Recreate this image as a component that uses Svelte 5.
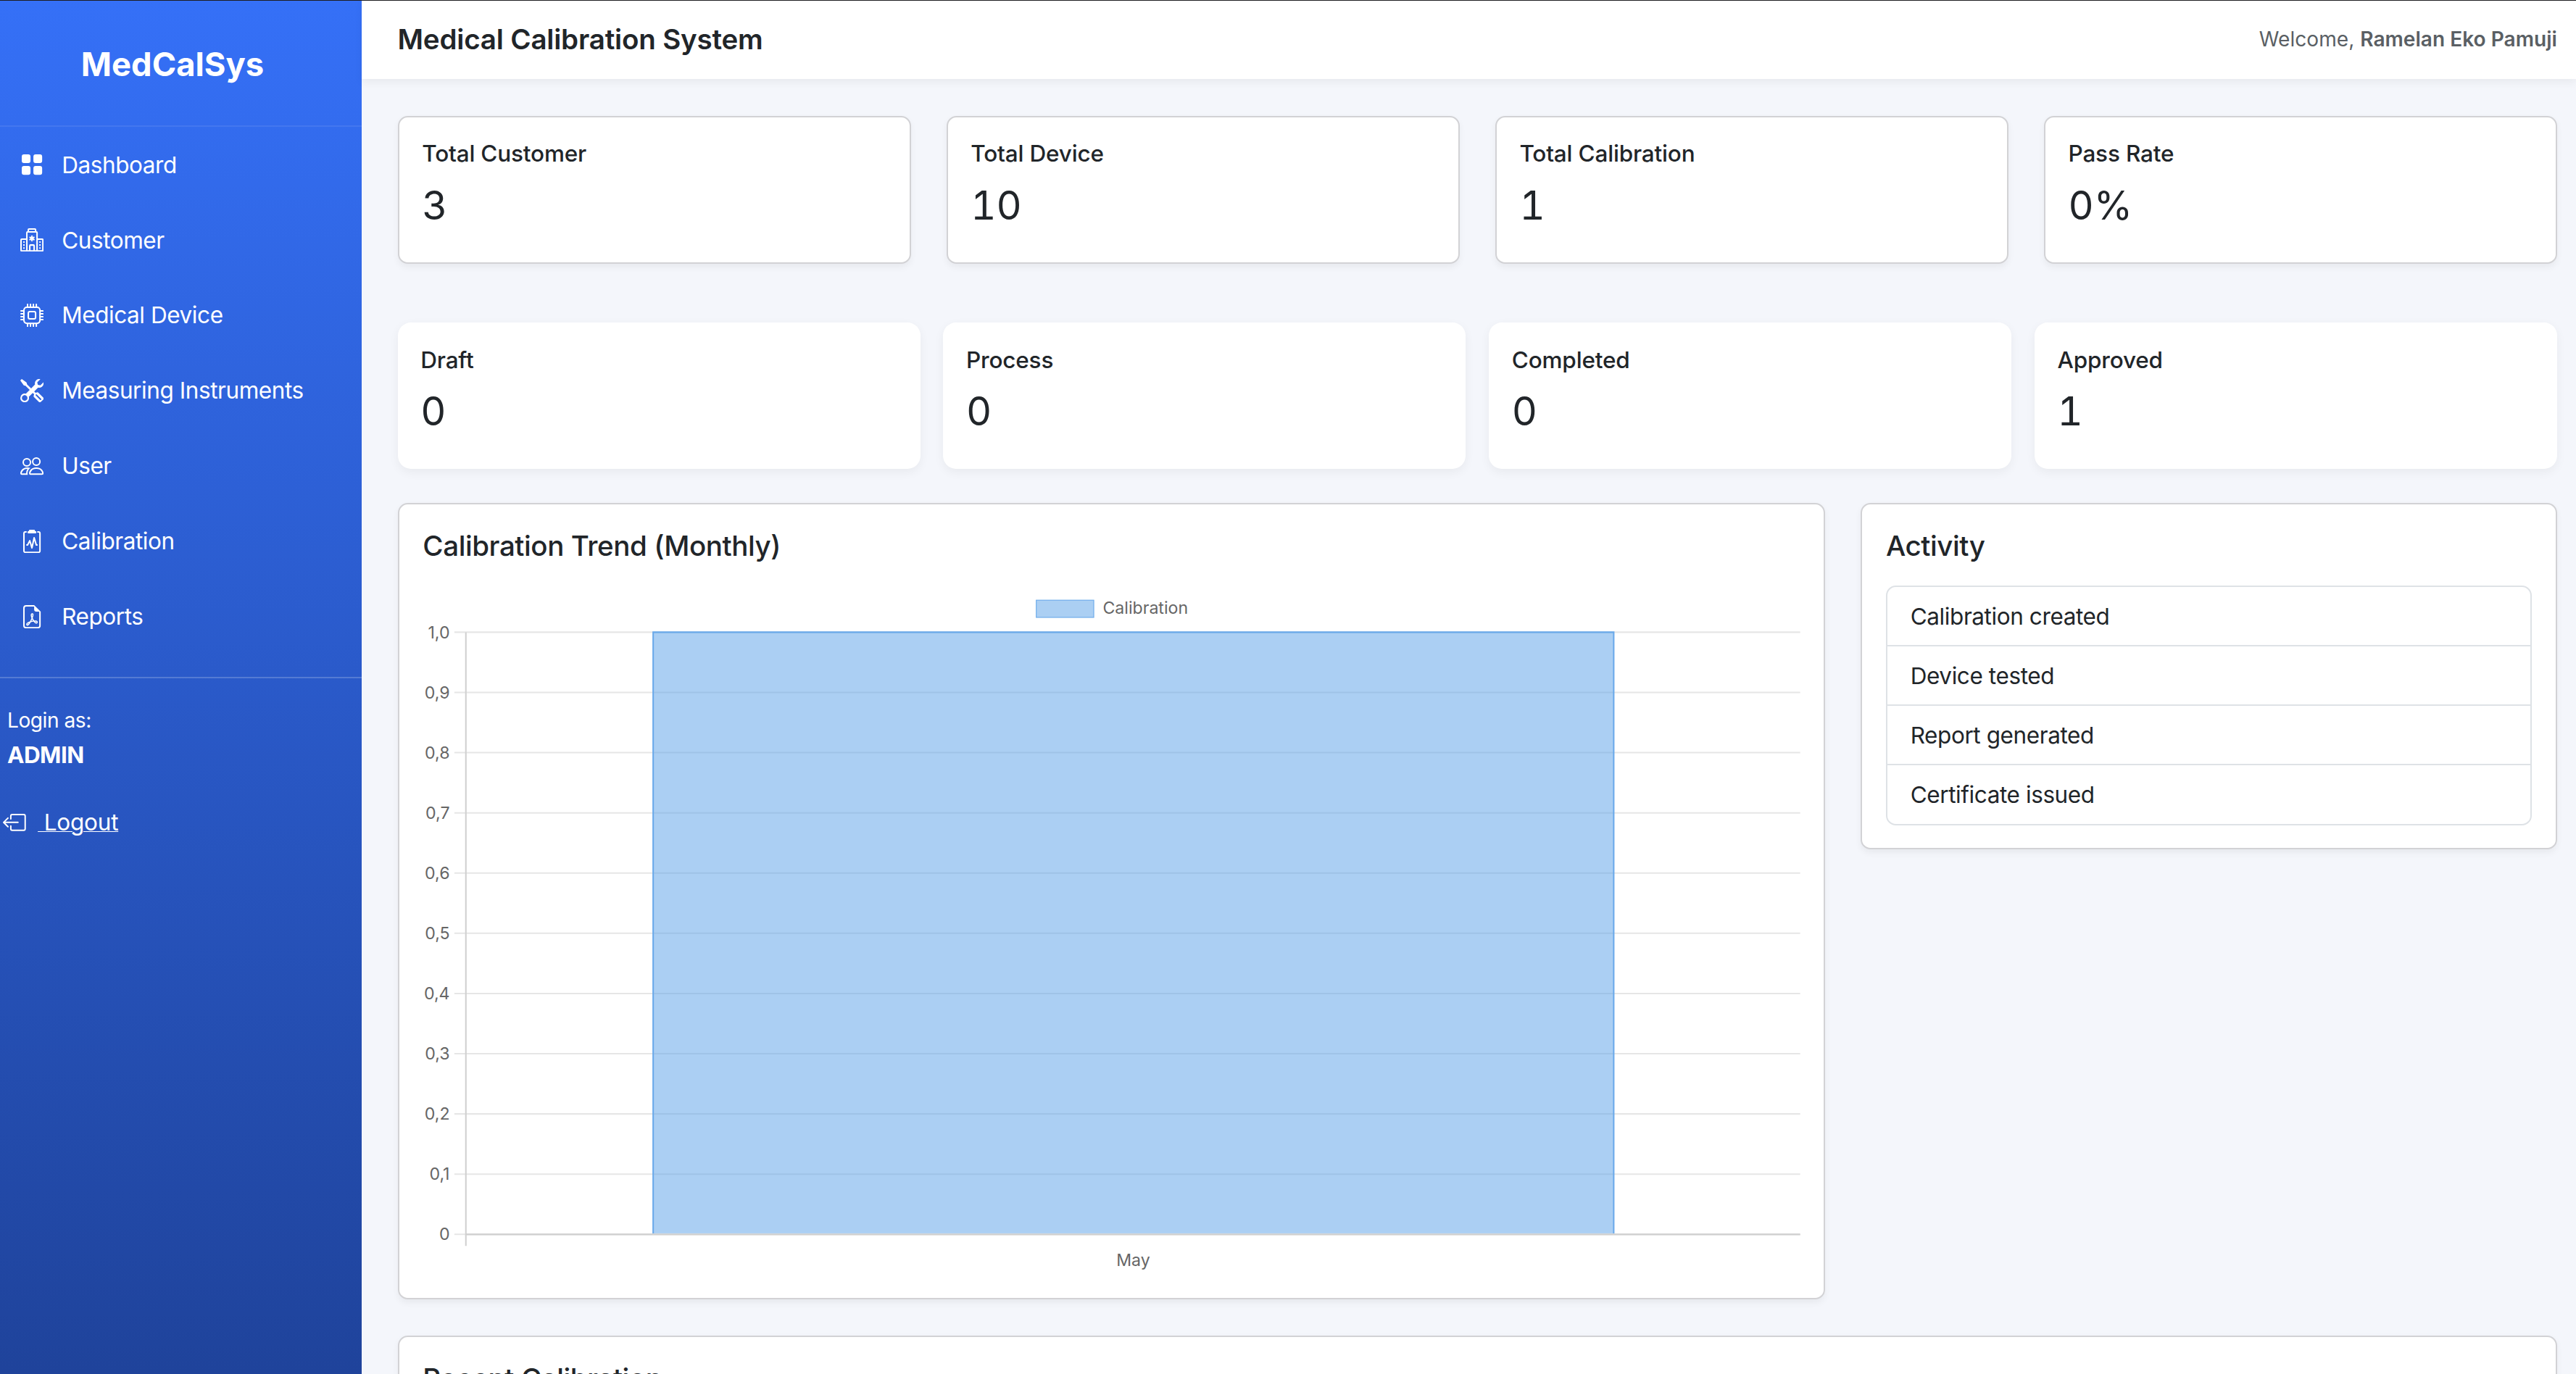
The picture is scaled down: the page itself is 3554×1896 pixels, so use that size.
<script>
    const navItems = [
        {
            label: "Dashboard",
            paths: [
                "M1 2.5A1.5 1.5 0 0 1 2.5 1h3A1.5 1.5 0 0 1 7 2.5v3A1.5 1.5 0 0 1 5.5 7h-3A1.5 1.5 0 0 1 1 5.5zm8 0A1.5 1.5 0 0 1 10.5 1h3A1.5 1.5 0 0 1 15 2.5v3A1.5 1.5 0 0 1 13.5 7h-3A1.5 1.5 0 0 1 9 5.5zm-8 8A1.5 1.5 0 0 1 2.5 9h3A1.5 1.5 0 0 1 7 10.5v3A1.5 1.5 0 0 1 5.5 15h-3A1.5 1.5 0 0 1 1 13.5zm8 0A1.5 1.5 0 0 1 10.5 9h3a1.5 1.5 0 0 1 1.5 1.5v3a1.5 1.5 0 0 1-1.5 1.5h-3A1.5 1.5 0 0 1 9 13.5z",
            ],
        },
        {
            label: "Customer",
            paths: [
                "M8.5 5.034v1.1l.953-.55.5.867L9 7l.953.55-.5.866-.953-.55v1.1h-1v-1.1l-.953.55-.5-.866L7 7l-.953-.55.5-.866.953.55v-1.1zM13.25 9a.25.25 0 0 0-.25.25v.5c0 .138.112.25.25.25h.5a.25.25 0 0 0 .25-.25v-.5a.25.25 0 0 0-.25-.25zM13 11.25a.25.25 0 0 1 .25-.25h.5a.25.25 0 0 1 .25.25v.5a.25.25 0 0 1-.25.25h-.5a.25.25 0 0 1-.25-.25zm.25 1.75a.25.25 0 0 0-.25.25v.5c0 .138.112.25.25.25h.5a.25.25 0 0 0 .25-.25v-.5a.25.25 0 0 0-.25-.25zm-11-4a.25.25 0 0 0-.25.25v.5c0 .138.112.25.25.25h.5A.25.25 0 0 0 3 9.75v-.5A.25.25 0 0 0 2.75 9zm0 2a.25.25 0 0 0-.25.25v.5c0 .138.112.25.25.25h.5a.25.25 0 0 0 .25-.25v-.5a.25.25 0 0 0-.25-.25zM2 13.25a.25.25 0 0 1 .25-.25h.5a.25.25 0 0 1 .25.25v.5a.25.25 0 0 1-.25.25h-.5a.25.25 0 0 1-.25-.25z",
                "M5 1a1 1 0 0 1 1-1h4a1 1 0 0 1 1 1v1a1 1 0 0 1 1 1v4h3a1 1 0 0 1 1 1v7a1 1 0 0 1-1 1H1a1 1 0 0 1-1-1V8a1 1 0 0 1 1-1h3V3a1 1 0 0 1 1-1zm2 14h2v-3H7zm3 0h1V3H5v12h1v-3a1 1 0 0 1 1-1h2a1 1 0 0 1 1 1zm0-14H6v1h4zm2 7v7h3V8zm-8 7V8H1v7z",
            ],
        },
        {
            label: "Medical Device",
            paths: [
                "M5 0a.5.5 0 0 1 .5.5V2h1V.5a.5.5 0 0 1 1 0V2h1V.5a.5.5 0 0 1 1 0V2h1V.5a.5.5 0 0 1 1 0V2A2.5 2.5 0 0 1 14 4.5h1.5a.5.5 0 0 1 0 1H14v1h1.5a.5.5 0 0 1 0 1H14v1h1.5a.5.5 0 0 1 0 1H14v1h1.5a.5.5 0 0 1 0 1H14a2.5 2.5 0 0 1-2.5 2.5v1.5a.5.5 0 0 1-1 0V14h-1v1.5a.5.5 0 0 1-1 0V14h-1v1.5a.5.5 0 0 1-1 0V14h-1v1.5a.5.5 0 0 1-1 0V14A2.5 2.5 0 0 1 2 11.5H.5a.5.5 0 0 1 0-1H2v-1H.5a.5.5 0 0 1 0-1H2v-1H.5a.5.5 0 0 1 0-1H2v-1H.5a.5.5 0 0 1 0-1H2A2.5 2.5 0 0 1 4.5 2V.5A.5.5 0 0 1 5 0m-.5 3A1.5 1.5 0 0 0 3 4.5v7A1.5 1.5 0 0 0 4.5 13h7a1.5 1.5 0 0 0 1.5-1.5v-7A1.5 1.5 0 0 0 11.5 3zM5 6.5A1.5 1.5 0 0 1 6.5 5h3A1.5 1.5 0 0 1 11 6.5v3A1.5 1.5 0 0 1 9.5 11h-3A1.5 1.5 0 0 1 5 9.5zM6.5 6a.5.5 0 0 0-.5.5v3a.5.5 0 0 0 .5.5h3a.5.5 0 0 0 .5-.5v-3a.5.5 0 0 0-.5-.5z",
            ],
        },
        {
            label: "Measuring Instruments",
            paths: [
                "M1 0 0 1l2.2 3.081a1 1 0 0 0 .815.419h.07a1 1 0 0 1 .708.293l2.675 2.675-2.617 2.654A3.003 3.003 0 0 0 0 13a3 3 0 1 0 5.878-.851l2.654-2.617.968.968-.305.914a1 1 0 0 0 .242 1.023l3.27 3.27a.997.997 0 0 0 1.414 0l1.586-1.586a.997.997 0 0 0 0-1.414l-3.27-3.27a1 1 0 0 0-1.023-.242L10.5 9.5l-.96-.96 2.68-2.643A3.005 3.005 0 0 0 16 3q0-.405-.102-.777l-2.14 2.141L12 4l-.364-1.757L13.777.102a3 3 0 0 0-3.675 3.68L7.462 6.46 4.793 3.793a1 1 0 0 1-.293-.707v-.071a1 1 0 0 0-.419-.814zm9.646 10.646a.5.5 0 0 1 .708 0l2.914 2.915a.5.5 0 0 1-.707.707l-2.915-2.914a.5.5 0 0 1 0-.708M3 11l.471.242.529.026.287.445.445.287.026.529L5 13l-.242.471-.026.529-.445.287-.287.445-.529.026L3 15l-.471-.242L2 14.732l-.287-.445L1.268 14l-.026-.529L1 13l.242-.471.026-.529.445-.287.287-.445.529-.026z",
            ],
        },
        {
            label: "User",
            paths: [
                "M15 14s1 0 1-1-1-4-5-4-5 3-5 4 1 1 1 1zm-7.978-1L7 12.996c.001-.264.167-1.03.76-1.72C8.312 10.629 9.282 10 11 10c1.717 0 2.687.63 3.24 1.276.593.69.758 1.457.76 1.72l-.008.002-.014.002zM11 7a2 2 0 1 0 0-4 2 2 0 0 0 0 4m3-2a3 3 0 1 1-6 0 3 3 0 0 1 6 0M6.936 9.28a6 6 0 0 0-1.23-.247A7 7 0 0 0 5 9c-4 0-5 3-5 4q0 1 1 1h4.216A2.24 2.24 0 0 1 5 13c0-1.01.377-2.042 1.09-2.904.243-.294.526-.569.846-.816M4.92 10A5.5 5.5 0 0 0 4 13H1c0-.26.164-1.03.76-1.724.545-.636 1.492-1.256 3.16-1.275ZM1.5 5.5a3 3 0 1 1 6 0 3 3 0 0 1-6 0m3-2a2 2 0 1 0 0 4 2 2 0 0 0 0-4",
            ],
        },
        {
            label: "Calibration",
            paths: [
                "M9.5 0a.5.5 0 0 1 .5.5.5.5 0 0 0 .5.5.5.5 0 0 1 .5.5V2a.5.5 0 0 1-.5.5h-5A.5.5 0 0 1 5 2v-.5a.5.5 0 0 1 .5-.5.5.5 0 0 0 .5-.5.5.5 0 0 1 .5-.5z",
                "M3 2.5a.5.5 0 0 1 .5-.5H4a.5.5 0 0 0 0-1h-.5A1.5 1.5 0 0 0 2 2.5v12A1.5 1.5 0 0 0 3.5 16h9a1.5 1.5 0 0 0 1.5-1.5v-12A1.5 1.5 0 0 0 12.5 1H12a.5.5 0 0 0 0 1h.5a.5.5 0 0 1 .5.5v12a.5.5 0 0 1-.5.5h-9a.5.5 0 0 1-.5-.5z",
                "M9.979 5.356a.5.5 0 0 0-.968.04L7.92 10.49l-.94-3.135a.5.5 0 0 0-.926-.08L4.69 10H4.5a.5.5 0 0 0 0 1H5a.5.5 0 0 0 .447-.276l.936-1.873 1.138 3.793a.5.5 0 0 0 .968-.04L9.58 7.51l.94 3.135A.5.5 0 0 0 11 11h.5a.5.5 0 0 0 0-1h-.128z",
            ],
        },
        {
            label: "Reports",
            paths: [
                "M14 14V4.5L9.5 0H4a2 2 0 0 0-2 2v12a2 2 0 0 0 2 2h8a2 2 0 0 0 2-2M9.5 3A1.5 1.5 0 0 0 11 4.5h2V14a1 1 0 0 1-1 1H4a1 1 0 0 1-1-1V2a1 1 0 0 1 1-1h5.5z",
                "M4.603 14.087a.8.8 0 0 1-.438-.42c-.195-.388-.13-.776.08-1.102.198-.307.526-.568.897-.787a7.7 7.7 0 0 1 1.482-.645 20 20 0 0 0 1.062-2.227 7.3 7.3 0 0 1-.43-1.295c-.086-.4-.119-.796-.046-1.136.075-.354.274-.672.65-.823.192-.077.4-.12.602-.077a.7.7 0 0 1 .477.365c.088.164.12.356.127.538.007.188-.012.396-.047.614-.084.51-.27 1.134-.52 1.794a11 11 0 0 0 .98 1.686 5.8 5.8 0 0 1 1.334.05c.364.066.734.195.96.465.12.144.193.32.2.518.007.192-.047.382-.138.563a1.04 1.04 0 0 1-.354.416.86.86 0 0 1-.51.138c-.331-.014-.654-.196-.933-.417a5.7 5.7 0 0 1-.911-.95 11.7 11.7 0 0 0-1.997.406 11.3 11.3 0 0 1-1.02 1.51c-.292.35-.609.656-.927.787a.8.8 0 0 1-.58.029m1.379-1.901q-.25.115-.459.238c-.328.194-.541.383-.647.547-.094.145-.096.25-.04.361q.016.032.026.044l.035-.012c.137-.056.355-.235.635-.572a8 8 0 0 0 .45-.606m1.64-1.33a13 13 0 0 1 1.01-.193 12 12 0 0 1-.51-.858 21 21 0 0 1-.5 1.05zm2.446.45q.226.245.435.41c.24.19.407.253.498.256a.1.1 0 0 0 .07-.015.3.3 0 0 0 .094-.125.44.44 0 0 0 .059-.2.1.1 0 0 0-.026-.063c-.052-.062-.2-.152-.518-.209a4 4 0 0 0-.612-.053zM8.078 7.8a7 7 0 0 0 .2-.828q.046-.282.038-.465a.6.6 0 0 0-.032-.198.5.5 0 0 0-.145.04c-.087.035-.158.106-.196.283-.04.192-.03.469.046.822q.036.167.09.346z",
            ],
        },
    ];

    const summary = [
        { label: "Total Customer", value: "3" },
        { label: "Total Device", value: "10" },
        { label: "Total Calibration", value: "1" },
        { label: "Pass Rate", value: "0%" },
    ];

    const statuses = [
        { label: "Draft", value: "0" },
        { label: "Process", value: "0" },
        { label: "Completed", value: "0" },
        { label: "Approved", value: "1" },
    ];

    const activity = ["Calibration created", "Device tested", "Report generated", "Certificate issued"];

    // chart geometry, in the card's own coordinates
    const yTop = 78.7;
    const yZero = 445.3;
    const ticks = [1, 0.9, 0.8, 0.7, 0.6, 0.5, 0.4, 0.3, 0.2, 0.1, 0].map((v) => ({
        y: yZero - (yZero - yTop) * v,
        label: v === 0 ? "0" : v === 1 ? "1,0" : String(v).replace(".", ","),
    }));
</script>

<div class="page">
    <div class="shell">
        <aside class="sidebar">
            <div class="brand">MedCalSys</div>
            <nav class="nav">
                {#each navItems as item}
                    <div class="nav-item">
                        <svg class="nav-icon" viewBox="0 0 16 16" fill="currentColor">
                            {#each item.paths as d}
                                <path {d} />
                            {/each}
                        </svg>
                        <span>{item.label}</span>
                    </div>
                {/each}
            </nav>
            <div class="side-foot">
                <div class="login-label">Login as:</div>
                <div class="login-role">ADMIN</div>
                <div class="logout">
                    <svg class="logout-icon" viewBox="0 0 16 16" fill="currentColor">
                        <path d="M6 12.5a.5.5 0 0 0 .5.5h8a.5.5 0 0 0 .5-.5v-9a.5.5 0 0 0-.5-.5h-8a.5.5 0 0 0-.5.5v2a.5.5 0 0 1-1 0v-2A1.5 1.5 0 0 1 6.5 2h8A1.5 1.5 0 0 1 16 3.5v9a1.5 1.5 0 0 1-1.5 1.5h-8A1.5 1.5 0 0 1 5 12.5v-2a.5.5 0 0 1 1 0z" />
                        <path d="M.146 8.354a.5.5 0 0 1 0-.708l3-3a.5.5 0 1 1 .708.708L1.707 7.5H10.5a.5.5 0 0 1 0 1H1.707l2.147 2.146a.5.5 0 0 1-.708.708z" />
                    </svg>
                    <a href="#logout">&nbsp;Logout</a>
                </div>
            </div>
        </aside>

        <div class="main">
            <header class="topbar">
                <h1>Medical Calibration System</h1>
                <div class="welcome">Welcome, <strong>Ramelan Eko Pamuji</strong></div>
            </header>

            <div class="content">
                <section class="row-summary">
                    {#each summary as s}
                        <div class="card stat">
                            <div class="stat-label">{s.label}</div>
                            <div class="stat-value">{s.value}</div>
                        </div>
                    {/each}
                </section>

                <section class="row-status">
                    {#each statuses as s}
                        <div class="status">
                            <div class="stat-label">{s.label}</div>
                            <div class="stat-value">{s.value}</div>
                        </div>
                    {/each}
                </section>

                <section class="row-panels">
                    <div class="card chart-card">
                        <h2>Calibration Trend (Monthly)</h2>
                        <svg class="chart" viewBox="0 0 869 484.6" font-family="Inter, sans-serif">
                            <rect x="389" y="59.2" width="35" height="10.5" fill="#abcff3" stroke="#6aa9ea" stroke-width="0.5" />
                            <text x="429.5" y="67.7" font-size="10.2" fill="#666">Calibration</text>
                            {#each ticks as t}
                                <line x1="34.8" x2="854" y1={t.y} y2={t.y} stroke="#e6e6e6" stroke-width="0.9" />
                                <text x="32" y={t.y + 3.6} text-anchor="end" font-size="10.2" fill="#666">{t.label}</text>
                            {/each}
                            <line x1="41.8" x2="41.8" y1={yTop} y2={yZero + 7} stroke="#d0d0d0" stroke-width="0.9" />
                            <rect x="155.8" y={yTop} width="584.7" height={yZero - yTop - 0.6} fill="rgba(87,159,231,0.5)" />
                            <path d="M155.8 {yZero - 0.6}V{yTop}H740.5V{yZero - 0.6}" fill="none" stroke="#6aa9ea" stroke-width="0.9" />
                            <line x1="41.8" x2="854" y1={yZero} y2={yZero} stroke="#cfcfcf" stroke-width="1" />
                            <text x="448" y="464.5" text-anchor="middle" font-size="10.2" fill="#666">May</text>
                        </svg>
                    </div>

                    <div class="card activity-card">
                        <h2>Activity</h2>
                        <ul class="activity">
                            {#each activity as a}
                                <li>{a}</li>
                            {/each}
                        </ul>
                    </div>
                </section>

                <section class="card recent">
                    <h2>Recent Calibration</h2>
                </section>
            </div>
        </div>
    </div>
</div>

<style>
    :global(body) {
        margin: 0;
        background: #f4f6fb;
    }

    .page {
        position: relative;
        height: 100vh;
        overflow: hidden;
    }

    /* hairline of the window chrome above the page */
    .page::before {
        content: "";
        position: absolute;
        inset: 0 0 auto;
        height: 1px;
        background: #1d1d20;
        z-index: 1;
    }

    /* the capture was taken at about 227% browser zoom, everything below is in css px of that page */
    .shell {
        zoom: 2.26658;
        display: flex;
        height: 836.5px;
        font-family: Inter, "Liberation Sans", sans-serif;
        color: #212529;
    }

    /* ── Sidebar ─────────────────────────────────────────────── */
    .sidebar {
        flex: 0 0 220px;
        background: linear-gradient(180deg, #3570f7 0%, #1f439b 100%);
        color: #fff;
    }

    .brand {
        height: 76.4px;
        line-height: 78.6px;
        padding-right: 10px;
        text-align: center;
        font-size: 20px;
        font-weight: 700;
        border-bottom: 1px solid rgba(255, 255, 255, 0.08);
    }

    .nav-item {
        display: flex;
        align-items: center;
        gap: 11.1px;
        height: 45.85px;
        padding-left: 12.3px;
        font-size: 13.9px;
        letter-spacing: -0.19px;
    }

    .nav-icon {
        width: 14.2px;
        height: 14.2px;
        flex: none;
    }

    .side-foot {
        margin-top: 14px;
        padding: 15.6px 0 0 4.4px;
        border-top: 1px solid rgba(255, 255, 255, 0.2);
    }

    .login-label {
        font-size: 12.4px;
        letter-spacing: -0.2px;
        line-height: 20px;
    }

    .login-role {
        font-size: 13.9px;
        font-weight: 700;
        letter-spacing: -0.25px;
        line-height: 20px;
        margin-top: 0.7px;
    }

    .logout {
        display: flex;
        align-items: center;
        margin: 21.4px 0 0 -2.7px;
        line-height: 20px;
        font-size: 13.9px;
        letter-spacing: -0.1px;
    }

    .logout-icon {
        width: 14px;
        height: 14px;
        flex: none;
        margin-right: 7.3px;
    }

    .logout a {
        color: #fff;
        text-decoration: underline;
        text-decoration-thickness: 0.5px;
    }

    /* ── Main ────────────────────────────────────────────────── */
    .main {
        flex: 1;
        min-width: 0;
    }

    .topbar {
        display: flex;
        align-items: center;
        justify-content: space-between;
        height: 48px;
        padding: 0 11.5px 0 22px;
        background: #fff;
        box-shadow: 0 2px 5px rgba(0, 0, 0, 0.05);
    }

    h1 {
        margin: 0;
        font-size: 17px;
        font-weight: 600;
        letter-spacing: -0.08px;
    }

    .welcome {
        font-size: 12.4px;
        color: #5a5f64;
    }

    .welcome strong {
        font-weight: 600;
    }

    .content {
        padding: 22.5px 11.5px 0 22px;
    }

    .card {
        background: #fff;
        border: 1px solid #d2d2d5;
        border-radius: 6px;
        box-shadow: 0 2px 4px rgba(0, 0, 0, 0.05);
        box-sizing: border-box;
    }

    .row-summary {
        display: grid;
        grid-template-columns: repeat(4, 1fr);
        gap: 21.6px;
    }

    .stat {
        height: 90px;
        padding: 13.5px 14px;
    }

    .stat-label {
        font-size: 13.9px;
        font-weight: 500;
        letter-spacing: -0.08px;
        line-height: 18px;
    }

    .stat-value {
        font-size: 24px;
        font-feature-settings: "tnum";
        line-height: 30px;
        margin-top: 7px;
    }

    .row-status {
        display: grid;
        grid-template-columns: repeat(4, 1fr);
        gap: 14px;
        margin-top: 35.8px;
    }

    .status {
        height: 89px;
        padding: 14px;
        box-sizing: border-box;
        background: #fff;
        border-radius: 8px;
        box-shadow: 0 2px 6px rgba(0, 0, 0, 0.05);
    }

    .row-panels {
        display: grid;
        grid-template-columns: 869px 1fr;
        gap: 21.6px;
        align-items: start;
        margin-top: 21px;
    }

    h2 {
        margin: 0;
        font-size: 17px;
        font-weight: 500;
        letter-spacing: -0.185px;
        line-height: 22px;
    }

    .chart-card {
        position: relative;
        height: 484.6px;
        padding: 14.5px 14.5px 0;
    }

    /* chart.js canvas stand-in, it covers the whole card */
    .chart {
        position: absolute;
        inset: -1px;
        width: 869px;
        height: 484.6px;
    }

    .activity-card {
        padding: 14.5px 14.5px 13.8px;
    }

    .activity {
        list-style: none;
        margin: 12.8px 0 0;
        padding: 0;
        border: 1px solid #dee2e6;
        border-radius: 6px;
    }

    .activity li {
        height: 36.2px;
        line-height: 36px;
        padding-left: 14px;
        font-size: 13.9px;
        letter-spacing: -0.18px;
        box-sizing: border-box;
        border-top: 1px solid #dee2e6;
    }

    .activity li:first-child {
        height: 35.5px;
        border-top: 0;
    }

    .recent {
        margin-top: 22.1px;
        padding: 14.5px;
        height: 200px;
    }
</style>
